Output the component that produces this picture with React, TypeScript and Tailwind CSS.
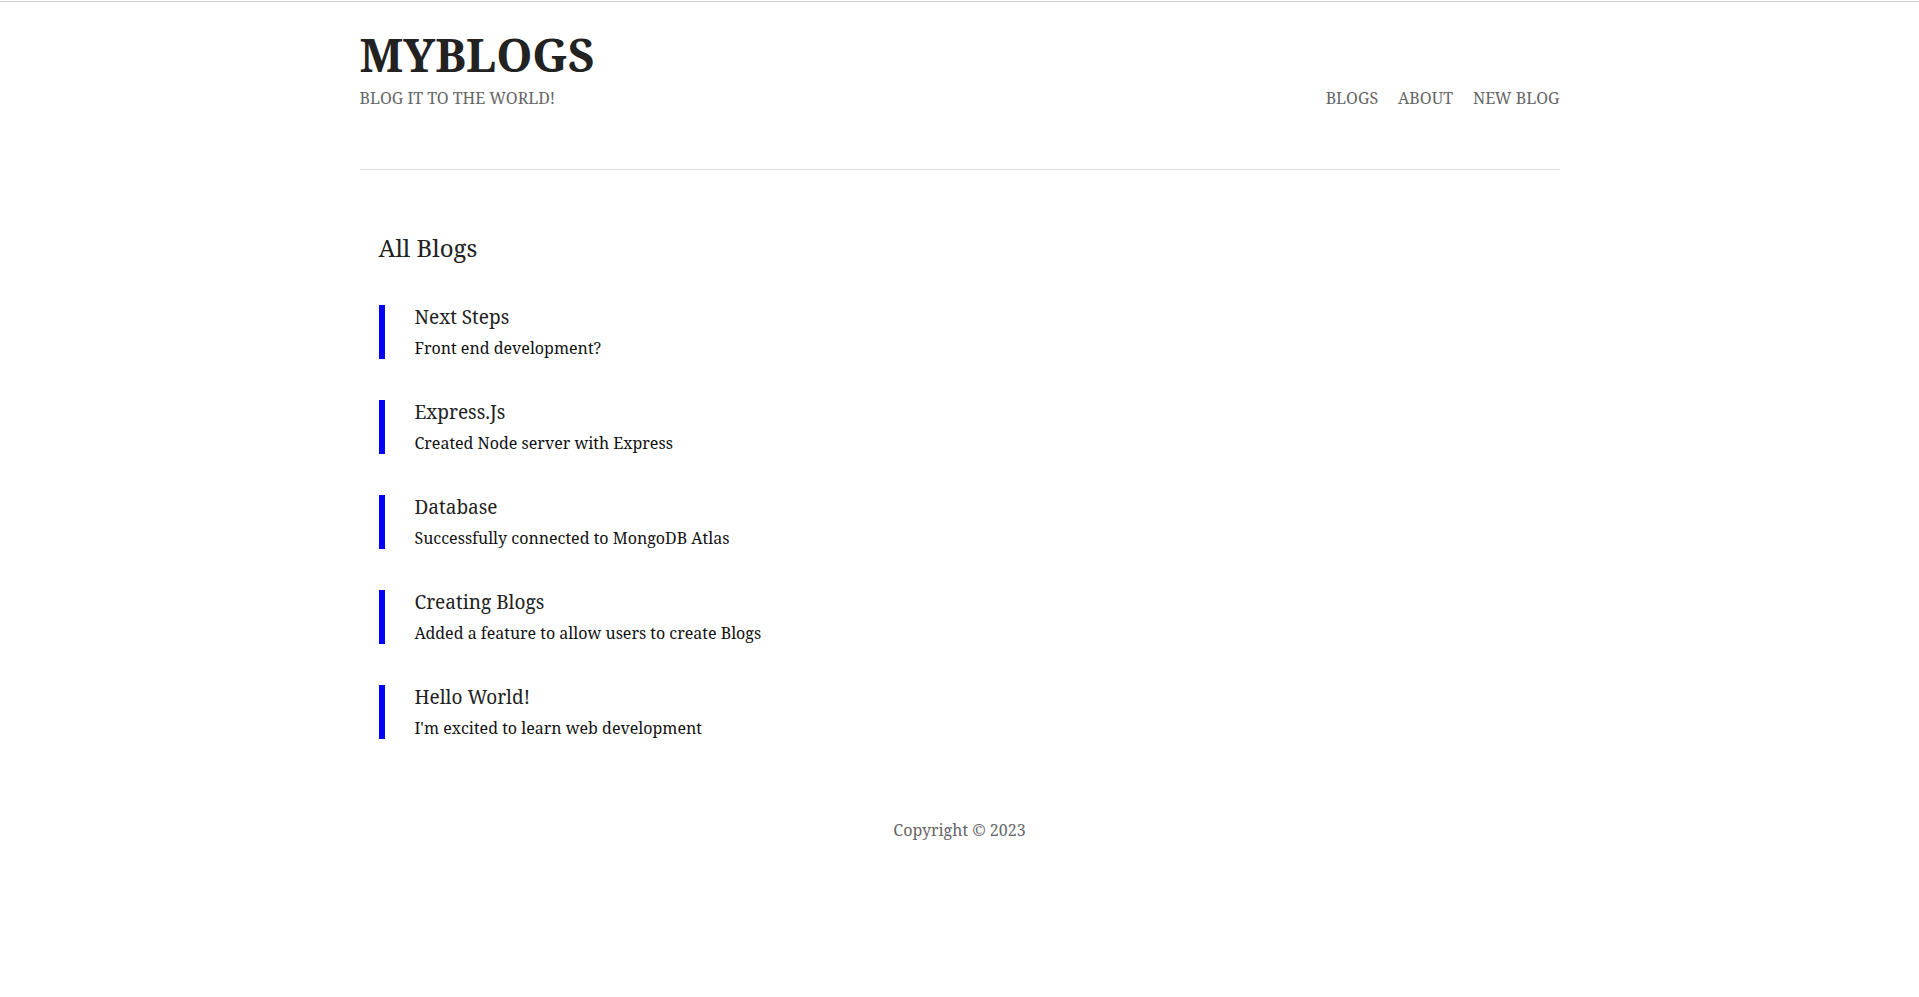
const blogs = [
    { title: "Next Steps", body: "Front end development?" },
    { title: "Express.Js", body: "Created Node server with Express" },
    { title: "Database", body: "Successfully connected to MongoDB Atlas" },
    { title: "Creating Blogs", body: "Added a feature to allow users to create Blogs" },
    { title: "Hello World!", body: "I'm excited to learn web development" },
]

export default function App() {
    return (
        <div className="min-h-[997px] bg-white border-t border-[#cfcfcf] mt-px text-[#222] font-['Noto_Serif','DejaVu_Serif',serif]">
            <div className="max-w-[1200px] mx-auto">
                <nav className="flex justify-between items-end pt-[25px] pb-[59px] border-b border-[#dddddd]">
                    <div>
                        <h1 className="text-[46px] leading-[1.2] font-bold text-[#222]">MYBLOGS</h1>
                        <p className="text-[16px] leading-[24px] mt-[4px] text-[#666] uppercase">Blog it to the world!</p>
                    </div>
                    <div className="flex gap-[20px] text-[16px] leading-[24px] text-[#666] uppercase">
                        <a href="#">Blogs</a>
                        <a href="#">About</a>
                        <a href="#">New Blog</a>
                    </div>
                </nav>

                <div className="px-[19px] pt-[62px]">
                    <h2 className="text-[24px] leading-[32px] text-[#222] mb-[41px]">All Blogs</h2>
                    <div className="flex flex-col gap-[41px]">
                        {blogs.map((b, i) => (
                            <div key={i} className="border-l-[6px] border-[#0000ff] pl-[30px] h-[54px]">
                                <h3 className="text-[19px] leading-[25px] text-[#222]">{b.title}</h3>
                                <p className="text-[16px] leading-[22px] mt-[7px] text-[#111]">{b.body}</p>
                            </div>
                        ))}
                    </div>
                </div>

                <footer className="text-center text-[16px] text-[#666] pt-[79px]">
                    Copyright © 2023
                </footer>
            </div>
        </div>
    )
}
